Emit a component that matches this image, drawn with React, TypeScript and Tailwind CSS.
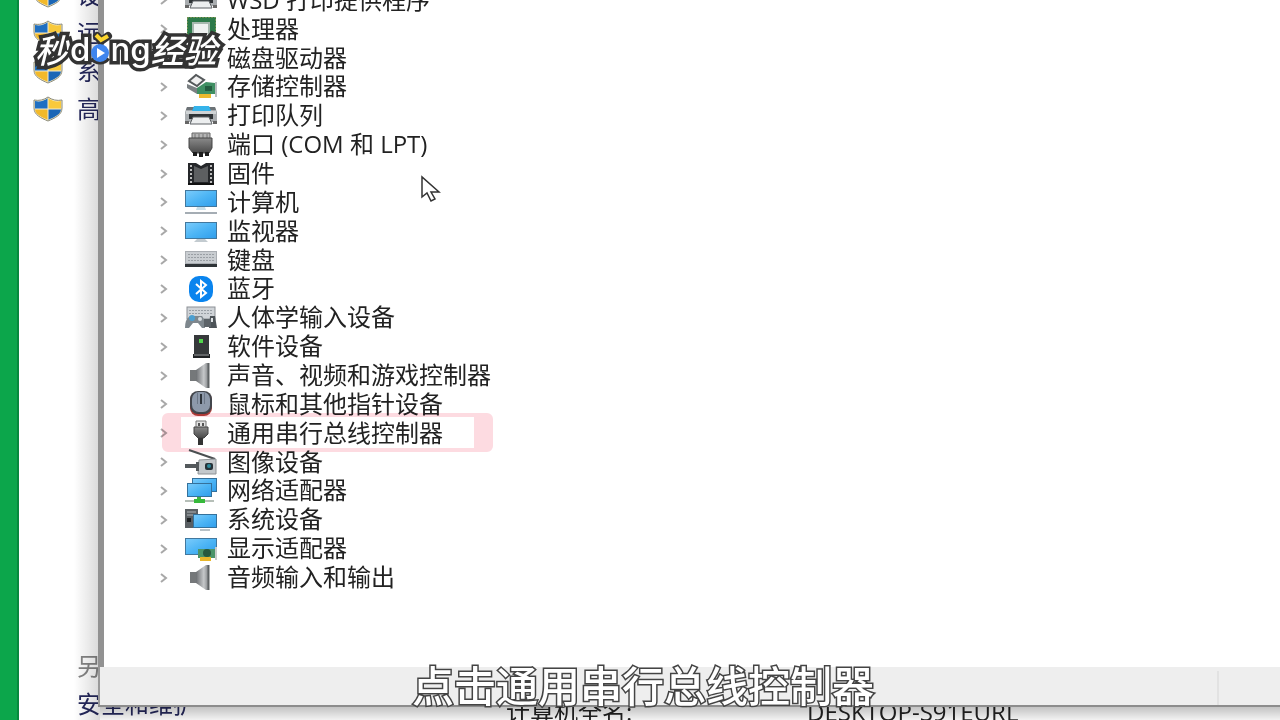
import React from 'react';

type IconProps = { children: React.ReactNode };

const Icon: React.FC<IconProps> = ({ children }) => (
  <svg viewBox="0 0 32 28" className="ml-4 h-7 w-8 shrink-0" aria-hidden="true">
    {children}
  </svg>
);

const Defs = () => (
  <svg className="absolute h-0 w-0" aria-hidden="true">
    <defs>
      <linearGradient id="screen" x1="0" y1="0" x2="1" y2="1">
        <stop offset="0" stopColor="#7cccfb" />
        <stop offset="0.5" stopColor="#4db5f5" />
        <stop offset="1" stopColor="#2f9deb" />
      </linearGradient>
      <linearGradient id="metal" x1="0" y1="0" x2="1" y2="0">
        <stop offset="0" stopColor="#6d7073" />
        <stop offset="0.6" stopColor="#c6c8ca" />
        <stop offset="1" stopColor="#7b7e81" />
      </linearGradient>
      <linearGradient id="dark" x1="0" y1="0" x2="0" y2="1">
        <stop offset="0" stopColor="#8a8a8a" />
        <stop offset="1" stopColor="#4a4a4a" />
      </linearGradient>
    </defs>
  </svg>
);

const Printer = () => (
  <Icon>
    <path d="M2 5h28l2 5v10H0V10z" fill="#a9adb0" />
    <path d="M2 5h28l1 3H1z" fill="#6c7276" />
    <path d="M9 4h15l2 5H7z" fill="#35b3ea" />
    <rect x="1" y="9" width="30" height="3" fill="#cfd3d5" />
    <rect x="4" y="12" width="24" height="5" fill="#2e3336" />
    <path d="M8 15h16l3 7H5z" fill="#eceeef" stroke="#5d6164" />
    <path d="M0 19h4v3H0zM28 19h4v3h-4z" fill="#666" />
  </Icon>
);

const Processor = () => (
  <Icon>
    <rect x="2" y="2" width="29" height="25" fill="#2d7a4a" />
    <rect x="2.500" y="2.500" width="28" height="24" fill="none" stroke="#b5a95a" strokeDasharray="1 2" />
    <rect x="8" y="8" width="16" height="14" fill="#eef1f0" stroke="#a6b8ae" strokeWidth="2" />
  </Icon>
);

const Disk = () => (
  <Icon>
    <path d="M4 11h24l4 5H0z" fill="#c2c5c7" />
    <rect y="15" width="32" height="8" rx="1" fill="#77797b" />
    <rect x="25" y="18" width="3" height="2" fill="#5bd35b" />
  </Icon>
);

const Storage = () => (
  <Icon>
    <path d="M4 8l7-6 8 5-7 6z" fill="#f0f0f0" stroke="#55595b" strokeWidth="2" />
    <path d="M2 11v4l10 6 4-3v-4l-4 1z" fill="#7b8083" />
    <path d="M12 15l9-6 9 1v11H12z" fill="#3f8f63" />
    <path d="M30 9h2v15h-2z" fill="#b9bfc1" />
    <rect x="20" y="13" width="7" height="5" fill="#245c40" />
    <rect x="14" y="21" width="12" height="4" fill="#edb92e" />
  </Icon>
);

const Port = () => (
  <Icon>
    <path d="M7 2h18v6H7z" fill="#b5b5b5" stroke="#666" />
    <path d="M10 3v4M14 3v4M18 3v4M22 3v4" stroke="#777" />
    <path d="M4 7h23v10l-3 5H8l-4-5z" fill="url(#dark)" stroke="#444" />
    <path d="M8 21h4v4H8zM20 21h4v4h-4zM14 21h4v5h-4z" fill="#1d1d1d" />
  </Icon>
);

const Firmware = () => (
  <Icon>
    <path d="M3 3h8l5 3 5-3h8v22H3z" fill="#25272a" />
    <path d="M9 6l7 3 7-3v16H9z" fill="#5d5f61" />
    <path d="M6 5v18M26 5v18" stroke="#bdbdbd" strokeWidth="2" strokeDasharray="2 2" />
    <path d="M3 24h26" stroke="#111" strokeWidth="2" />
  </Icon>
);

const Computer = () => (
  <Icon>
    <rect x="0.500" y="2.500" width="31" height="16" fill="url(#screen)" stroke="#42789e" />
    <path d="M12 19h8l1 3H11z" fill="#c5dde9" />
    <path d="M0 25h32" stroke="#a5adb4" strokeWidth="2" />
  </Icon>
);

const Monitor = () => (
  <Icon>
    <rect x="0.500" y="5.500" width="31" height="16" fill="url(#screen)" stroke="#42789e" />
    <path d="M12 22h8l3 3H9z" fill="#c3cbd0" />
  </Icon>
);

const Keyboard = () => (
  <Icon>
    <rect y="5" width="32" height="16" fill="#a9adb2" />
    <rect x="1" y="6" width="30" height="11" fill="#c9cdd1" />
    <path d="M3 8.500h26M3 11.500h26M3 14.500h26" stroke="#9a9fa4" strokeDasharray="2 1" />
    <rect y="18" width="32" height="3" fill="#2f3438" />
  </Icon>
);

const Bluetooth = () => (
  <Icon>
    <rect x="4" y="1" width="24" height="26" rx="10" fill="#0a84ee" />
    <path d="M11 9l10 9-5 4V6l5 4-10 9" fill="none" stroke="#fff" strokeWidth="2" />
  </Icon>
);

const Hid = () => (
  <Icon>
    <rect x="2" y="3" width="28" height="12" fill="#d0d4d8" stroke="#8b9095" />
    <path d="M4 6.500h24M4 9.500h24" stroke="#999fa5" strokeDasharray="2 1" />
    <path d="M5 12h12q3 3 3 12h-3l-4-5H8l-4 5H0q0-9 5-12z" fill="#7e878d" />
    <circle cx="7" cy="14" r="3" fill="#4b9fd1" />
    <circle cx="15" cy="15" r="2" fill="#d6dbde" />
    <path d="M25 12h5l2 12h-8z" fill="#4d5358" />
    <path d="M19 15h7v8h-7z" fill="#5c6368" />
    <path d="M27 14v4" stroke="#dfe3e6" strokeWidth="2" />
  </Icon>
);

const Software = () => (
  <Icon>
    <rect x="9" y="2" width="15" height="19" fill="#36393b" />
    <rect x="14" y="6" width="4" height="4" fill="#52d64d" />
    <path d="M8 21h17v4H8z" fill="#202224" />
    <path d="M9 22h15" stroke="#a5a8aa" />
  </Icon>
);

const Speaker = () => (
  <Icon>
    <rect x="5" y="8" width="7" height="11" fill="#75787a" />
    <path d="M11 8L21 1h3v25h-3l-10-7z" fill="url(#metal)" />
    <path d="M23.500 1v25" stroke="#5f6365" strokeWidth="2" />
  </Icon>
);

const Mouse = () => (
  <Icon>
    <rect x="5" y="2" width="22" height="24" rx="8" fill="#b0423d" />
    <rect x="5" y="1" width="22" height="23" rx="8" fill="#42464c" />
    <rect x="7" y="2" width="18" height="20" rx="7" fill="#8d99aa" />
    <path d="M12.500 3v11M19.500 3v11" stroke="#6c7787" />
    <rect x="15" y="4" width="2" height="10" fill="#2e343b" />
  </Icon>
);

const Usb = () => (
  <Icon>
    <path d="M11 2h10v7H11z" fill="#e2e2e2" stroke="#777" />
    <path d="M13 4h2v3h-2zM17 4h2v3h-2z" fill="#555" />
    <path d="M9 8h14v7l-4 4h-6l-4-4z" fill="url(#dark)" stroke="#444" />
    <path d="M13 19h5v7h-5z" fill="#333" />
  </Icon>
);

const Imaging = () => (
  <Icon>
    <path d="M4 2l26 9" stroke="#4b4f51" strokeWidth="2" />
    <path d="M14 12l17-1v15H13z" fill="#c3c8cb" stroke="#8e9396" />
    <path d="M0 16h11v4H0zM11 14h3v9h-3z" fill="#54595c" />
    <rect x="20" y="15" width="8" height="7" rx="2" fill="#253238" />
    <circle cx="24" cy="18" r="2" fill="#2d8a9b" />
  </Icon>
);

const Network = () => (
  <Icon>
    <rect x="7.500" y="1.500" width="24" height="13" fill="url(#screen)" stroke="#35719b" />
    <rect x="2.500" y="6.500" width="24" height="13" fill="url(#screen)" stroke="#35719b" />
    <path d="M12 20h4v3h-4z" fill="#46b446" />
    <path d="M0 24h29" stroke="#b6bfb8" strokeWidth="2" />
    <path d="M9 22h11v4H9z" fill="#36b93b" />
  </Icon>
);

const SystemDevice = () => (
  <Icon>
    <rect y="3" width="13" height="19" fill="#5a5f63" />
    <path d="M2 6h9M2 9h9" stroke="#aeb4b8" />
    <rect x="2" y="12" width="4" height="4" fill="#1c1f21" />
    <rect x="8.500" y="8.500" width="23" height="13" fill="url(#screen)" stroke="#35719b" />
    <path d="M15 23h10v2H15z" fill="#b8c1c6" />
  </Icon>
);

const Display = () => (
  <Icon>
    <rect x="0.500" y="3.500" width="31" height="16" fill="url(#screen)" stroke="#42789e" />
    <path d="M13 14h17v9H13z" fill="#4b9469" />
    <path d="M30 12h2v13h-2z" fill="#c8ccca" />
    <circle cx="22" cy="18" r="4" fill="#28583e" />
    <rect x="15" y="22" width="11" height="4" fill="#e8b62a" />
  </Icon>
);

const Shield = () => (
  <svg viewBox="0 0 30 28" className="h-7 w-[30px] shrink-0" aria-hidden="true">
    <path d="M15 2c4 3 9 4 14 3v8c0 7-7 10-14 13C8 23 1 20 1 13V5c5 1 10 0 14-3z" fill="#f6efcf" stroke="#8b8a78" />
    <path d="M15 3v11H2V6c5 1 9 0 13-3z" fill="#1f6fc2" />
    <path d="M15 3v11h13V6c-5 1-9 0-13-3z" fill="#f8c93c" />
    <path d="M15 14v11C8 22 2 19 2 14z" fill="#f2b92a" />
    <path d="M15 14v11c7-3 13-6 13-11z" fill="#1b66b6" />
    <path d="M15 3v22M2 14h26" stroke="#f3ead0" />
  </svg>
);

const devices = [
  { name: 'WSD 打印提供程序', icon: Printer },
  { name: '处理器', icon: Processor },
  { name: '磁盘驱动器', icon: Disk },
  { name: '存储控制器', icon: Storage },
  { name: '打印队列', icon: Printer },
  { name: '端口 (COM 和 LPT)', icon: Port },
  { name: '固件', icon: Firmware },
  { name: '计算机', icon: Computer },
  { name: '监视器', icon: Monitor },
  { name: '键盘', icon: Keyboard },
  { name: '蓝牙', icon: Bluetooth },
  { name: '人体学输入设备', icon: Hid },
  { name: '软件设备', icon: Software },
  { name: '声音、视频和游戏控制器', icon: Speaker },
  { name: '鼠标和其他指针设备', icon: Mouse },
  { name: '通用串行总线控制器', icon: Usb, marked: true },
  { name: '图像设备', icon: Imaging },
  { name: '网络适配器', icon: Network },
  { name: '系统设备', icon: SystemDevice },
  { name: '显示适配器', icon: Display },
  { name: '音频输入和输出', icon: Speaker },
];

const sidebarLinks = ['设备管理器', '远程设置', '系统保护', '高级系统设置'];

const DeviceTree = () => (
  <ul className="-mt-[14px] grid h-[606px] auto-rows-fr pl-[55px]">
    {devices.map(({ name, icon: DeviceIcon, marked }) => (
      <li key={name} className="flex min-h-0 items-center">
        <button aria-expanded={false} className="relative flex h-7 items-center whitespace-nowrap">
          <svg viewBox="0 0 10 12" className="h-3 w-[10px] shrink-0" aria-hidden="true">
            <path d="M2 2l5 4-5 4" fill="none" stroke="#a8a8a8" strokeWidth="2" />
          </svg>
          <DeviceIcon />
          <span className="ml-[10px] pb-px leading-6">{name}</span>
          {marked && (
            <span className="absolute -top-[6px] -right-[50px] left-[3px] h-[39px] rounded-md border-x-[19px] border-y-4 border-[#fddbe1] mix-blend-multiply" />
          )}
        </button>
      </li>
    ))}
  </ul>
);

const Watermark = () => (
  <div className="absolute top-[27px] left-[35px] flex h-[44px] items-center font-['Noto_Sans_CJK_SC',sans-serif] text-[33px] leading-[44px] font-medium text-white italic [paint-order:stroke_fill] [-webkit-text-stroke:7px_#333]">
    <span>秒</span>
    <span className="ml-[2px] font-['Inter',sans-serif] not-italic">d</span>
    <svg viewBox="0 0 20 32" className="relative z-10 h-8 w-5 shrink-0 overflow-visible" aria-label="o">
      <path d="M7 3l4 5 7-5" fill="none" stroke="#333" strokeWidth="8" strokeLinecap="round" />
      <path d="M2 25a10 10 0 0 0 16 0" fill="none" stroke="#333" strokeWidth="5" />
      <circle cx="10" cy="20" r="9" fill="#3f85ee" />
      <path d="M7 15v10l8-5z" fill="#fff" />
      <path d="M6 2l5 5 7-4" fill="none" stroke="#fcd52f" strokeWidth="4" />
    </svg>
    <span className="font-['Inter',sans-serif] not-italic">ng</span>
    <span>经验</span>
  </div>
);

const App: React.FC = () => {
  return (
    <div className="relative flex h-screen overflow-hidden bg-white font-['Open_Sans','Noto_Sans_CJK_SC',sans-serif] text-2xl leading-7 text-[#222]">
      <Defs />
      <div className="w-[19px] shrink-0 border-r-2 border-[#07893d] bg-[#0ca64b]" />

      {/* system window behind the device manager */}
      <aside className="flex w-[180px] shrink-0 flex-col justify-between pl-[14px] text-[#25285c]">
        <nav className="-mt-6">
          {sidebarLinks.map(label => (
            <a key={label} href="#" className="flex h-[38px] items-center gap-[14px] whitespace-nowrap">
              <Shield />
              {label}
            </a>
          ))}
        </nav>
        <div className="-mb-[3px] pl-11 whitespace-nowrap">
          <p className="flex h-[38px] items-center text-[#858585]">另请参阅</p>
          <a href="#" className="flex h-[38px] items-center">安全和维护</a>
        </div>
      </aside>
      <main className="flex min-w-0 flex-1 flex-col justify-end">
        <dl className="-mb-[6px] flex pl-[307px] whitespace-nowrap">
          <dt className="w-[301px]">计算机全名:</dt>
          <dd>DESKTOP-S91EURL</dd>
        </dl>
      </main>

      <div className="absolute inset-y-0 left-[74px] w-[26px] bg-linear-to-r from-transparent to-black/15" />
      <div className="absolute right-0 bottom-0 left-[100px] h-[14px] bg-linear-to-b from-black/25 to-black/5" />

      <section className="absolute top-0 right-0 bottom-[13px] left-[98px] flex flex-col border-b-2 border-[#8c8c8c] bg-white">
        <div className="min-h-0 flex-1 border-l-[6px] border-[#929292]">
          <DeviceTree />
        </div>
        <footer className="flex h-[38px] shrink-0 justify-end border-l-2 border-l-[#999] bg-[#eeeeee] pt-1">
          <div className="w-[63px] border-l-2 border-[#e2e2e2]" />
        </footer>
      </section>

      <Watermark />

      <svg viewBox="0 0 20 28" className="absolute top-[175px] left-[421px] h-7 w-5" aria-hidden="true">
        <path d="M1 2v20l5-4 4 8 4-2-4-7h8z" fill="#fff" stroke="#333" strokeWidth="1.500" />
      </svg>

      <p className="absolute inset-x-0 bottom-2 pl-[6px] text-center font-['Noto_Sans_CJK_SC',sans-serif] text-[42px] leading-[56px] font-medium text-white [paint-order:stroke_fill] [-webkit-text-stroke:3px_#444]">
        点击通用串行总线控制器
      </p>
    </div>
  );
};

export default App;
